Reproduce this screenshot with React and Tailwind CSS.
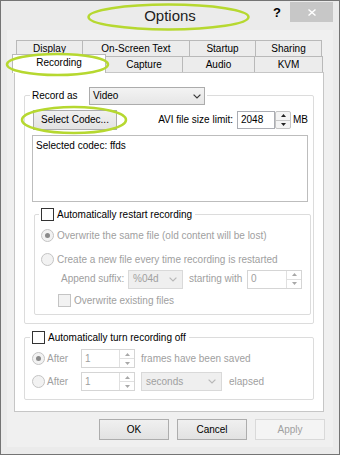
import React from "react";

const FONT = "font-['Liberation_Sans',Arial,sans-serif]";

function Chevron({ disabled }) {
  return (
    <svg width="8" height="5" viewBox="0 0 8 5">
      <path d="M0.6 0.6 L4 4 L7.4 0.6" fill="none" stroke={disabled ? "#b8b8b8" : "#3a3a3a"} strokeWidth="1.2" />
    </svg>
  );
}

function Arrow({ up, color }) {
  return (
    <svg width="5" height="3" viewBox="0 0 5 3">
      <path d={up ? "M0 3 L2.5 0 L5 3 Z" : "M0 0 L2.5 3 L5 0 Z"} fill={color} />
    </svg>
  );
}

function Checkbox({ disabled }) {
  return (
    <div
      className={
        disabled
          ? "w-[13px] h-[13px] shrink-0 border border-[#c4c4c4] bg-[#f2f2f2]"
          : "w-[13px] h-[13px] shrink-0 border border-[#333333] bg-white"
      }
    />
  );
}

function Radio({ checked }) {
  return (
    <div className="w-[13px] h-[13px] shrink-0 rounded-full border border-[#c4c4c4] bg-[#f2f2f2] flex items-center justify-center">
      {checked ? <div className="w-[5px] h-[5px] rounded-full bg-[#8a8a8a]" /> : null}
    </div>
  );
}

function DisabledSpinInput({ value, w }) {
  return (
    <div className={`${w} h-[19px] border border-[#d5d5d5] bg-white flex`}>
      <div className="flex-1 pl-[3px] flex items-center text-[#a0a0a0]">{value}</div>
      <div className="w-[15px] flex flex-col border-l border-[#e0e0e0]">
        <div className="flex-1 flex items-center justify-center border-b border-[#e0e0e0]">
          <Arrow up color="#a8a8a8" />
        </div>
        <div className="flex-1 flex items-center justify-center">
          <Arrow color="#a8a8a8" />
        </div>
      </div>
    </div>
  );
}

function DisabledSelect({ value, w }) {
  return (
    <div className={`${w} h-[19px] border border-[#d9d9d9] bg-[#efefef] flex items-center pl-[4px] pr-[5px] justify-between text-[#a0a0a0]`}>
      <span>{value}</span>
      <Chevron disabled />
    </div>
  );
}

export default function App() {
  const tab1 = "h-[16px] border-t border-l border-[#b9b9b9] bg-[#ececec] flex items-center justify-center";
  const tab2 = "h-[16px] border-t border-r border-[#b9b9b9] bg-[#ececec] flex items-center justify-center";
  const dis = "text-[#a0a0a0]";
  return (
    <div className={`relative w-[340px] h-[455px] border border-[#747474] bg-[#ebebeb] flex flex-col ${FONT} text-[10px] leading-[12px] text-black`}>
      {/* title bar */}
      <div className="flex h-[29px] shrink-0">
        <div className="flex-1" />
        <div className="text-[15px] leading-[29px] text-[#1c1c1c]">Options</div>
        <div className="flex-1 flex justify-end items-start">
          <span className="mt-[4px] text-[13px] leading-[16px] font-bold">?</span>
          <div className="ml-[9px] mt-[1px] mr-[6px] w-[43px] h-[20px] bg-[#c7c7c7] flex items-center justify-center">
            <svg width="8" height="7" viewBox="0 0 8 7">
              <path d="M0.5 0.5 L7.5 6.5 M7.5 0.5 L0.5 6.5" stroke="#ffffff" strokeWidth="1.4" />
            </svg>
          </div>
        </div>
      </div>

      {/* client area */}
      <div className="mx-[6px] h-[417px] bg-[#f0f0f0] flex flex-col">
        {/* tab row 1 */}
        <div className="pt-[10px] pl-[9px] flex">
          <div className={`${tab1} w-[66px]`}>Display</div>
          <div className={`${tab1} w-[107px]`}>On-Screen Text</div>
          <div className={`${tab1} w-[66px]`}>Startup</div>
          <div className={`${tab1} w-[67px] border-r`}>Sharing</div>
        </div>
        {/* tab row 2 */}
        <div className="pl-[5px] flex items-start h-[16px]">
          <div className="relative z-10 -mt-[2px] w-[94px] h-[19px] border-t border-l border-r border-[#b9b9b9] bg-white flex items-center justify-center pb-[2px]">
            Recording
          </div>
          <div className={`${tab2} w-[77px]`}>Capture</div>
          <div className={`${tab2} w-[72px]`}>Audio</div>
          <div className={`${tab2} w-[68px]`}>KVM</div>
        </div>

        {/* panel */}
        <div className="ml-[7px] w-[310px] h-[340px] border border-[#c6c6c6] bg-white flex flex-col">
          {/* group 1 */}
          <div className="mt-[22px] ml-[9px] w-[290px] border border-[#dcdcdc] rounded-[2px] pb-[8px] flex flex-col">
            <div className="-mt-[9px] ml-[5px] px-[2px] bg-white self-start flex items-center h-[18px]">
              <span className="w-[57px]">Record as</span>
              <div className="w-[116px] h-[18px] border border-[#acacac] bg-gradient-to-b from-[#f3f3f3] to-[#e6e6e6] flex items-center justify-between pl-[3px] pr-[3px]">
                <span>Video</span>
                <Chevron />
              </div>
            </div>
            <div className="mt-[5px] flex items-center h-[20px] pr-[5px]">
              <div className="ml-[8px] w-[84px] h-[20px] border border-[#acacac] bg-gradient-to-b from-[#f0f0f0] to-[#e3e3e3] flex items-center justify-center">
                Select Codec...
              </div>
              <div className="flex-1" />
              <span className="mr-[4px]">AVI file size limit:</span>
              <div className="w-[38px] h-[18px] border border-[#abadb3] bg-white flex items-center pl-[3px]">2048</div>
              <div className="w-[16px] h-[18px] border border-[#c4c4c4] rounded-[2px] bg-[#f4f4f4] flex flex-col">
                <div className="flex-1 flex items-center justify-center border-b border-[#c8c8c8]">
                  <Arrow up color="#222" />
                </div>
                <div className="flex-1 flex items-center justify-center">
                  <Arrow color="#222" />
                </div>
              </div>
              <span className="ml-[2px]">MB</span>
            </div>
            <div className="mt-[5px] ml-[7px] w-[276px] h-[67px] border border-[#bdbdbd] bg-white pl-[3px] pt-[4px]">
              Selected codec: ffds
            </div>

            {/* inner group */}
            <div className="mt-[12px] ml-[9px] w-[277px] border border-[#dcdcdc] rounded-[2px] pb-[7px] flex flex-col">
              <div className="-mt-[7px] ml-[4px] pl-[2px] pr-[3px] bg-white self-start flex items-center gap-[3px] h-[13px]">
                <Checkbox />
                <span>Automatically restart recording</span>
              </div>
              <div className={`mt-[8px] ml-[6px] flex items-center gap-[3px] h-[13px] ${dis}`}>
                <Radio checked />
                <span>Overwrite the same file (old content will be lost)</span>
              </div>
              <div className={`mt-[11px] ml-[6px] flex items-center gap-[3px] h-[13px] ${dis}`}>
                <Radio />
                <span>Create a new file every time recording is restarted</span>
              </div>
              <div className={`mt-[3px] ml-[26px] flex items-center h-[20px] ${dis}`}>
                <span className="w-[67px]">Append suffix:</span>
                <DisabledSelect value="%04d" w="w-[55px]" />
                <span className="ml-[6px] w-[58px]">starting with</span>
                <DisabledSpinInput value="0" w="w-[55px]" />
              </div>
              <div className={`mt-[5px] ml-[23px] flex items-center gap-[3px] h-[13px] ${dis}`}>
                <Checkbox disabled />
                <span>Overwrite existing files</span>
              </div>
            </div>
          </div>

          {/* group 2 */}
          <div className="mt-[13px] ml-[9px] w-[290px] border border-[#dcdcdc] rounded-[2px] pb-[8px] flex flex-col">
            <div className="-mt-[7px] ml-[5px] pl-[2px] pr-[3px] bg-white self-start flex items-center gap-[3px] h-[13px]">
              <Checkbox />
              <span>Automatically turn recording off</span>
            </div>
            <div className={`mt-[5px] ml-[7px] flex items-center h-[19px] ${dis}`}>
              <Radio checked />
              <span className="ml-[2px] w-[34px]">After</span>
              <DisabledSpinInput value="1" w="w-[54px]" />
              <span className="ml-[6px]">frames have been saved</span>
            </div>
            <div className={`mt-[4px] ml-[7px] flex items-center h-[19px] ${dis}`}>
              <Radio />
              <span className="ml-[2px] w-[34px]">After</span>
              <DisabledSpinInput value="1" w="w-[54px]" />
              <div className="ml-[6px]">
                <DisabledSelect value="seconds" w="w-[81px]" />
              </div>
              <span className="ml-[7px]">elapsed</span>
            </div>
          </div>
        </div>

        {/* buttons */}
        <div className="mt-[7px] pr-[8px] flex justify-end gap-[8px]">
          <div className="w-[70px] h-[21px] border border-[#adadad] bg-gradient-to-b from-[#f0f0f0] to-[#e2e2e2] flex items-center justify-center">OK</div>
          <div className="w-[70px] h-[21px] border border-[#adadad] bg-gradient-to-b from-[#f0f0f0] to-[#e2e2e2] flex items-center justify-center">Cancel</div>
          <div className="w-[70px] h-[21px] border border-[#d9d9d9] bg-[#f4f4f4] flex items-center justify-center text-[#a0a0a0]">Apply</div>
        </div>
      </div>

      {/* green highlight ellipses */}
      <svg className="absolute left-[-1px] top-[-1px] pointer-events-none z-20" width="340" height="455" viewBox="0 0 340 455">
        <ellipse cx="168.5" cy="17" rx="80" ry="12.5" fill="none" stroke="#b6d830" strokeWidth="2.5" />
        <ellipse cx="57.5" cy="64.5" rx="50.5" ry="10.5" fill="none" stroke="#b6d830" strokeWidth="2.5" />
        <ellipse cx="74" cy="120" rx="52" ry="13" fill="none" stroke="#b6d830" strokeWidth="2.5" />
      </svg>
    </div>
  );
}
